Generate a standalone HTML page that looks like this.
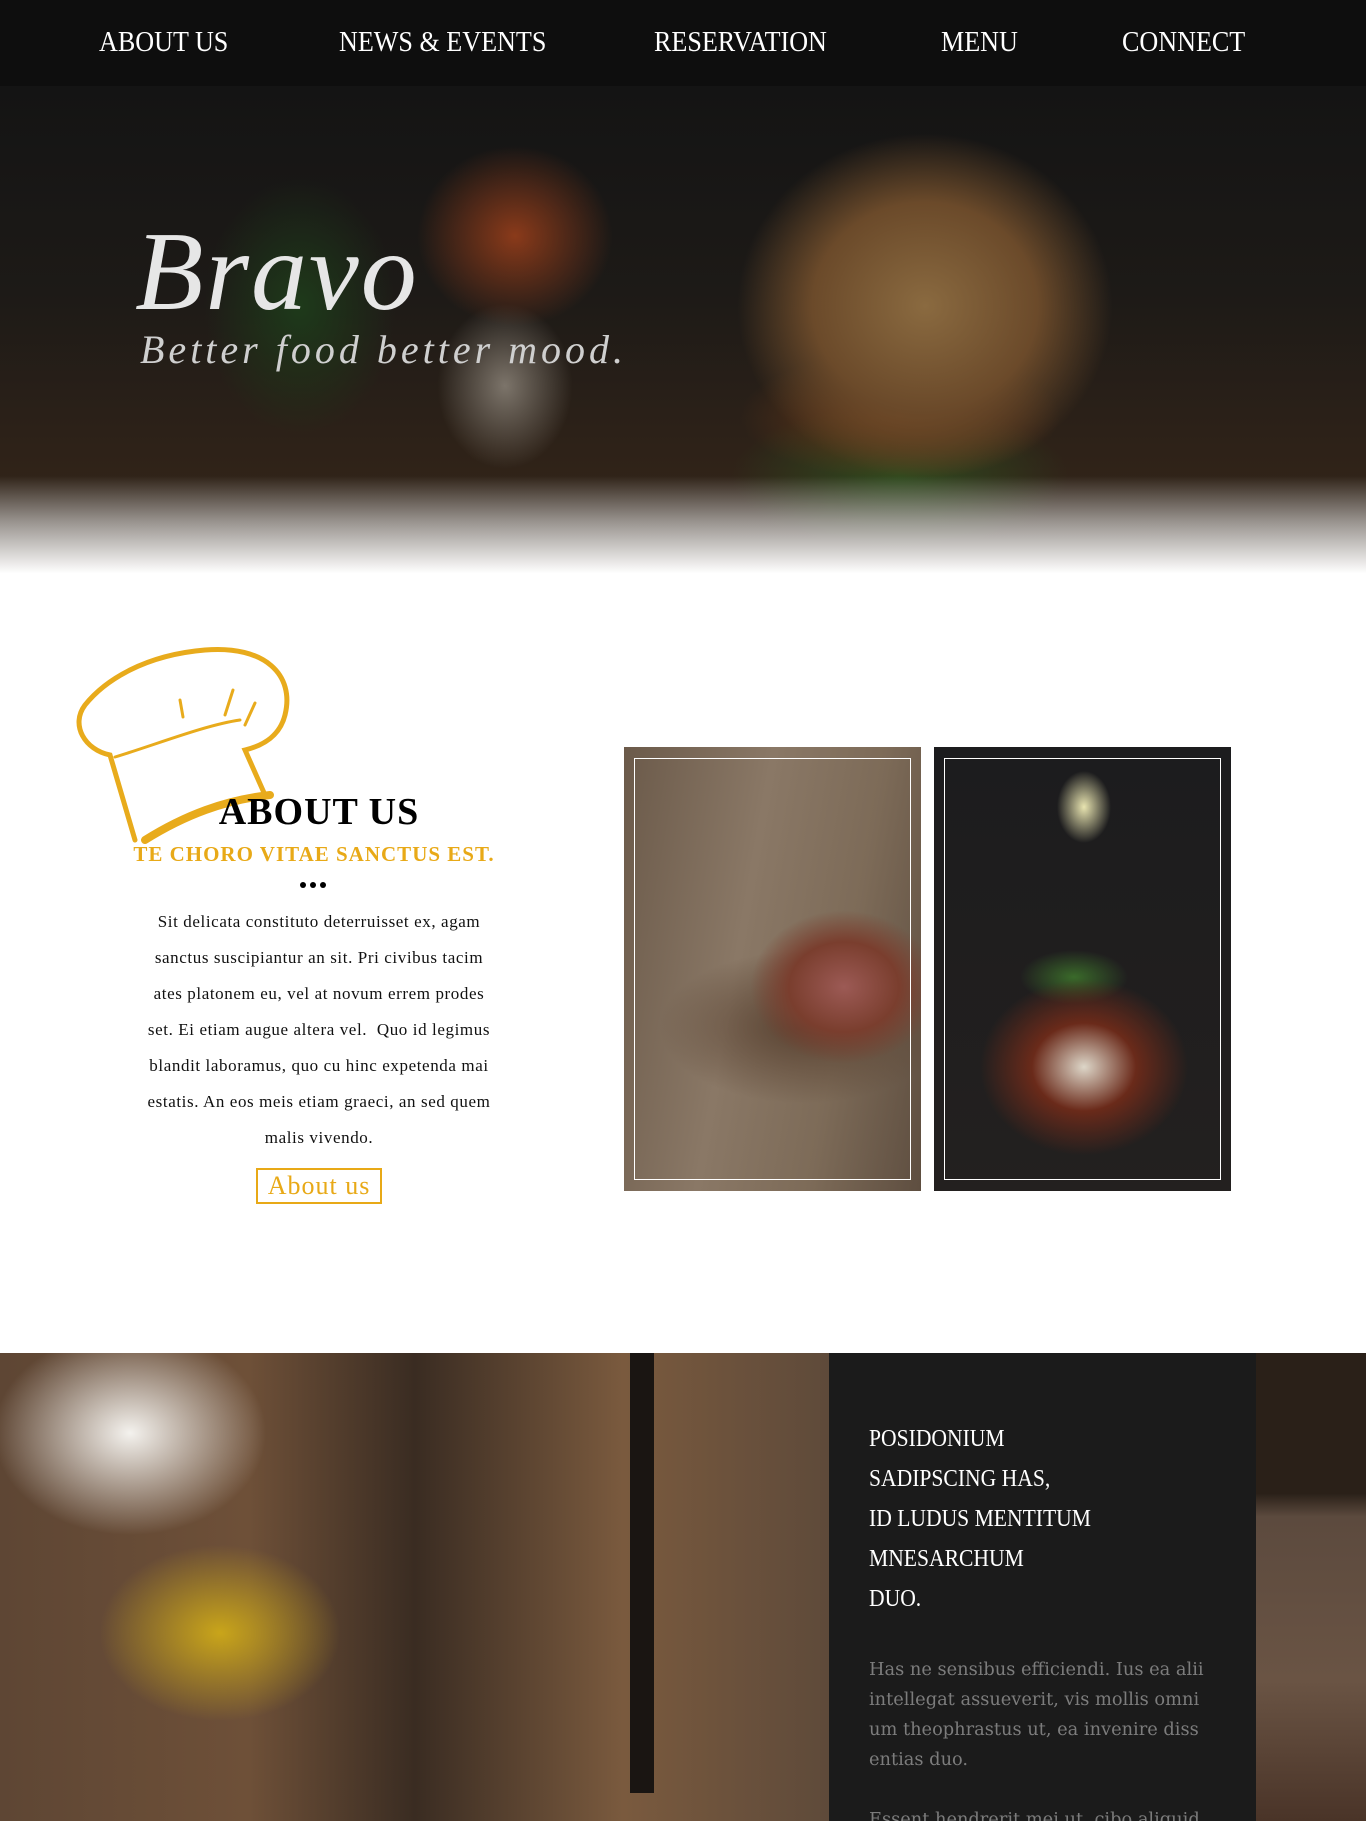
<!DOCTYPE html>
<html><head><meta charset="utf-8">
<style>
*{margin:0;padding:0;box-sizing:border-box}
body{width:1366px;height:1821px;overflow:hidden;background:#fff;font-family:"Liberation Serif",serif;position:relative}
.nav{position:absolute;left:0;top:0;width:1366px;height:86px;background:#0e0e0e;z-index:5}
.nav span{position:absolute;top:24px;color:#fff;font-size:29px;transform:scaleX(.9);transform-origin:left;line-height:36px}
.hero{position:absolute;left:0;top:86px;width:1366px;height:520px;overflow:hidden;
background:
radial-gradient(ellipse 250px 230px at 925px 220px,#8a6a40 0%,#6b4a2a 45%,rgba(60,40,20,0) 75%),
radial-gradient(ellipse 200px 80px at 900px 330px,#6a3a18 0%,rgba(40,20,10,0) 80%),
radial-gradient(ellipse 210px 90px at 900px 390px,#2f4a1e 0%,rgba(30,40,20,0) 80%),
radial-gradient(ellipse 130px 120px at 515px 150px,#8a3a1a 0%,rgba(60,25,10,0) 75%),
radial-gradient(ellipse 90px 110px at 505px 300px,#7c746a 0%,rgba(60,55,50,0) 75%),
radial-gradient(ellipse 120px 160px at 300px 220px,#1e3a1a 0%,rgba(20,30,15,0) 80%),
linear-gradient(#141414 0%,#1d1a17 40%,#2e2218 70%,#3a2a1c 100%)}
.hero .fade{position:absolute;left:0;bottom:0;width:100%;height:130px;background:linear-gradient(rgba(255,255,255,0) 0%,rgba(220,220,220,.6) 35%,#fff 75%,#fff 100%)}
.bravo{position:absolute;left:135px;top:122px;font-style:italic;font-size:112px;color:#e6e6e6;letter-spacing:2px}
.tag{position:absolute;left:140px;top:240px;font-style:italic;font-size:40px;color:#cfcfcf;letter-spacing:4px}
.hat{position:absolute;left:75px;top:645px}
h2{position:absolute;left:0;width:638px;text-align:center;top:790px;font-size:38px;font-weight:bold;letter-spacing:1px;color:#000}
.sub{position:absolute;left:0;width:628px;text-align:center;top:842px;font-size:21px;color:#e8a917;font-weight:bold;letter-spacing:1px}
.dots{position:absolute;left:300px;top:881px;width:40px;height:8px;white-space:nowrap;line-height:6px}
.dots i{display:inline-block;width:6px;height:6px;border-radius:50%;background:#000;margin-right:4px}
.para{position:absolute;left:100px;width:438px;top:904px;text-align:center;font-size:17px;letter-spacing:.6px;line-height:36px;color:#111;white-space:nowrap}
.btn{position:absolute;left:256px;top:1168px;width:126px;height:36px;border:2px solid #e8a917;color:#e8a917;font-size:26px;text-align:center;line-height:32px;letter-spacing:1px}
.pic{position:absolute;top:747px;width:297px;height:444px;overflow:hidden}
.pic .fr{position:absolute;left:10px;top:11px;right:10px;bottom:11px;border:1px solid #fff}
.p1{left:624px;background:
radial-gradient(ellipse 110px 90px at 220px 240px,#9c5a55 0%,#7a3e2e 50%,rgba(90,60,40,0) 85%),
radial-gradient(ellipse 170px 90px at 180px 280px,#5a4332 0%,rgba(80,60,40,0) 85%),
linear-gradient(100deg,#6b5a4a 0%,#8a7866 40%,#7d6b58 70%,#5e4e40 100%)}
.p2{left:934px;background:
radial-gradient(ellipse 30px 40px at 150px 60px,#e8e4b0 0%,rgba(200,200,150,0) 90%),
radial-gradient(ellipse 130px 110px at 150px 320px,#ddd6c8 0%,#6a2a1a 40%,rgba(40,30,30,0) 80%),
radial-gradient(ellipse 60px 30px at 140px 230px,#3a6a2a 0%,rgba(40,60,30,0) 90%),
linear-gradient(#1c1c1e,#23201f)}
.bot{position:absolute;left:0;top:1353px;width:1366px;height:468px;overflow:hidden}
.rest{position:absolute;left:0;top:0;width:830px;height:468px;background:
radial-gradient(ellipse 150px 110px at 220px 280px,#c9a51a 0%,rgba(180,150,30,0) 80%),
radial-gradient(ellipse 160px 120px at 130px 80px,#f4f2ee 0%,rgba(240,240,240,0) 85%),
linear-gradient(90deg,#5e4634 0%,#6e5038 30%,#3a2c22 50%,#7a5a3e 75%,#5e4a3a 100%)}
.col{position:absolute;left:630px;top:0;width:24px;height:440px;background:#1a1512}
.panel{position:absolute;left:829px;top:0;width:427px;height:468px;background:#1b1b1b}
.right{position:absolute;left:1256px;top:0;width:110px;height:468px;background:linear-gradient(#2a2018 0,#2a2018 30%,#5c4a3e 35%,#6a5444 70%,#4a3428 100%)}
.ph{position:absolute;left:40px;top:66px;color:#fff;font-size:24px;line-height:40px;transform:scaleX(.9);transform-origin:left}
.pp{position:absolute;left:40px;top:302px;color:#7c7c7c;font-family:"DejaVu Serif",serif;font-size:17.8px;line-height:30px;white-space:nowrap}
</style></head><body>
<div class="nav">
<span style="left:99px">ABOUT US</span>
<span style="left:339px">NEWS &amp; EVENTS</span>
<span style="left:654px">RESERVATION</span>
<span style="left:941px">MENU</span>
<span style="left:1122px">CONNECT</span>
</div>
<div class="hero">
<div class="bravo">Bravo</div>
<div class="tag">Better food better mood.</div>
<div class="fade"></div>
</div>
<svg class="hat" width="225" height="200" viewBox="0 0 225 200"><g fill="none" stroke="#e8ab1c" stroke-linecap="round">
<path d="M60 195 L35 110 C10 105 -5 80 10 60 C30 35 70 10 130 5 C190 0 220 30 210 70 C205 90 190 100 170 105 L190 150" stroke-width="5"/>
<path d="M40 112 C80 100 130 80 165 75" stroke-width="3"/>
<path d="M70 195 C110 170 150 155 195 150" stroke-width="8"/>
<path d="M108 72 L105 55 M150 70 L158 45 M170 80 L180 58" stroke-width="3"/>
</g></svg>
<h2>ABOUT US</h2>
<div class="sub">TE CHORO VITAE SANCTUS EST.</div>
<div class="dots"><i></i><i></i><i></i></div>
<div class="para">Sit delicata constituto deterruisset ex, agam<br>sanctus suscipiantur an sit. Pri civibus tacim<br>ates platonem eu, vel at novum errem prodes<br>set. Ei etiam augue altera vel.&nbsp; Quo id legimus<br>blandit laboramus, quo cu hinc expetenda mai<br>estatis. An eos meis etiam graeci, an sed quem<br>malis vivendo.</div>
<div class="btn">About us</div>
<div class="pic p1"><div class="fr"></div></div>
<div class="pic p2"><div class="fr"></div></div>
<div class="bot">
<div class="rest"><div class="col"></div></div>
<div class="panel">
<div class="ph">POSIDONIUM<br>SADIPSCING HAS,<br>ID LUDUS MENTITUM<br>MNESARCHUM<br>DUO.</div>
<div class="pp">Has ne sensibus efficiendi. Ius ea alii<br>intellegat assueverit, vis mollis omni<br>um theophrastus ut, ea invenire diss<br>entias duo.<br><br>Essent hendrerit mei ut, cibo aliquid</div>
</div>
<div class="right"></div>
</div>
</body></html>
